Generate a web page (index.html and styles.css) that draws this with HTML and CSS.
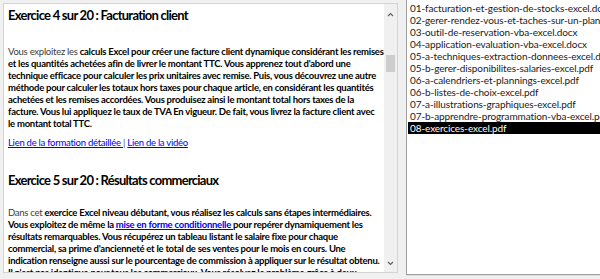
FILE: index.html
```html
<!DOCTYPE html>
<html lang="fr">
<head>
    <meta charset="UTF-8">
    <meta name="viewport" content="width=device-width, initial-scale=1.0">
    <title>Exercices Excel</title>
    <link rel="stylesheet" href="styles.css">
</head>
<body>
    <div class="app">
        <div class="reader">
            <div class="content">
                <h2>Exercice 4 sur 20 : Facturation client</h2>
                <p class="intro"><span class="light">Vous exploitez les</span> calculs Excel pour créer une facture client dynamique considérant les remises<br>
                et les quantités achetées afin de livrer le montant TTC. Vous apprenez tout d'abord une<br>
                technique efficace pour calculer les prix unitaires avec remise. Puis, vous découvrez une autre<br>
                méthode pour calculer les totaux hors taxes pour chaque article, en considérant les quantités<br>
                achetées et les remises accordées. Vous produisez ainsi le montant total hors taxes de la<br>
                facture. Vous lui appliquez le taux de TVA En vigueur. De fait, vous livrez la facture client avec<br>
                le montant total TTC.</p>
                <p class="links"><a href="#">Lien de la formation détaillée </a> <span class="sep">|</span> <a href="#">Lien de la vidéo</a></p>

                <h2 class="second">Exercice 5 sur 20 : Résultats commerciaux</h2>
                <p class="intro2"><span class="light">Dans cet</span> exercice Excel niveau débutant, vous réalisez les calculs sans étapes intermédiaires.<br>
                Vous exploitez de même la <a href="#">mise en forme conditionnelle </a>pour repérer dynamiquement les<br>
                résultats remarquables. Vous récupérez un tableau listant le salaire fixe pour chaque<br>
                commercial, sa prime d'ancienneté et le total de ses ventes pour le mois en cours. Une<br>
                indication renseigne aussi sur le pourcentage de commission à appliquer sur le résultat obtenu.<br>
                Il n'est pas identique pour tous les commerciaux. Vous résolvez le problème grâce à deux</p>
            </div>
            <div class="scrollbar">
                <svg class="arrow" width="7" height="5" viewBox="0 0 7 5"><polyline points="1,4 3.5,1.5 6,4" fill="none" stroke="#606060" stroke-width="1.2"/></svg>
                <div class="thumb"></div>
                <div class="track-space"></div>
                <svg class="arrow" width="7" height="5" viewBox="0 0 7 5"><polyline points="1,1 3.5,3.5 6,1" fill="none" stroke="#606060" stroke-width="1.2"/></svg>
            </div>
        </div>

        <ul class="files">
            <li>01-facturation-et-gestion-de-stocks-excel.docx</li>
            <li>02-gerer-rendez-vous-et-taches-sur-un-planning-excel.pdf</li>
            <li>03-outil-de-reservation-vba-excel.docx</li>
            <li>04-application-evaluation-vba-excel.docx</li>
            <li>05-a-techniques-extraction-donnees-excel.docx</li>
            <li>05-b-gerer-disponibilites-salaries-excel.pdf</li>
            <li>06-a-calendriers-et-plannings-excel.pdf</li>
            <li>06-b-listes-de-choix-excel.pdf</li>
            <li>07-a-illustrations-graphiques-excel.pdf</li>
            <li>07-b-apprendre-programmation-vba-excel.pdf</li>
            <li class="selected">08-exercices-excel.pdf</li>
        </ul>
    </div>
</body>
</html>
```

FILE: styles.css
```css
body {
    margin: 0;
    padding: 0;
    background-color: #f0f0f0;
    font-family: Lato, 'Liberation Sans', sans-serif;
    color: #000;
    overflow: hidden;
}
.app {
    display: flex;
    height: 279px;
    width: 600px;
    overflow: hidden;
}
.reader {
    margin: 3px 0 0 3px;
    width: 393px;
    height: 268px;
    background: #fff;
    border: 1px solid #d4d4d4;
    display: flex;
    flex-shrink: 0;
}
.content {
    flex: 1;
    padding: 2px 0 0 4px;
    overflow: hidden;
    white-space: nowrap;
}
h2 {
    font-size: 13px;
    line-height: 18px;
    margin: 0;
    font-weight: bold;
    letter-spacing: -0.75px;
}
h2.second {
    margin-top: 22px;
}
p {
    font-size: 9.5px;
    line-height: 12px;
    font-weight: bold;
    letter-spacing: -0.26px;
    margin: 0;
}
.intro {
    margin-top: 22px;
}
.intro2 {
    margin-top: 18px;
}
.light {
    font-weight: normal;
    color: #3a3a3a;
}
.links {
    margin-top: 7px;
    font-weight: normal;
}
a {
    color: #0000ee;
}
.sep {
    color: #555;
}
.scrollbar {
    width: 13px;
    background: #f0f0f0;
    display: flex;
    flex-direction: column;
    align-items: center;
    padding: 8px 0 6px;
    box-sizing: border-box;
}
.arrow {
    display: block;
}
.thumb {
    width: 9px;
    height: 17px;
    background: #cdcdcd;
    margin-top: 38px;
}
.track-space {
    flex: 1;
}
.files {
    list-style: none;
    margin: 0 0 0 8px;
    padding: 2px 0 0 1px;
    width: 200px;
    height: 272px;
    flex-shrink: 0;
    background: #fff;
    border-left: 1px solid #a0a0a0;
    border-bottom: 1px solid #a0a0a0;
    box-shadow: 0 1px 0 #dcdcdc;
    font-size: 10px;
    line-height: 12px;
    letter-spacing: -0.1px;
    color: #1a1a1a;
}
.files li {
    padding-left: 2px;
    white-space: nowrap;
}
.files li.selected {
    background: #000;
    color: #fff;
}
```
